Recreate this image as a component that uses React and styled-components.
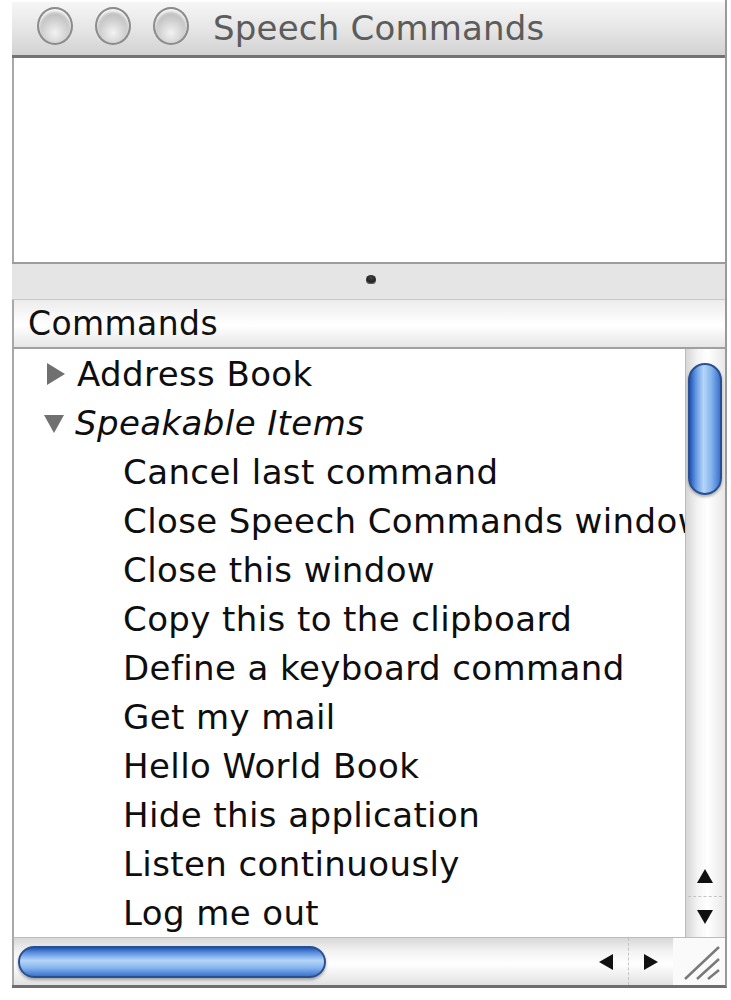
import React from "react";
import styled, { createGlobalStyle } from "styled-components";

const Global = createGlobalStyle`
  html, body { margin: 0; padding: 0; background: #ffffff; }
  body { font-family: "DejaVu Sans", "Liberation Sans", sans-serif; }
`;

const Window = styled.div`
  margin-left: 12px;
  width: 715px;
  height: 988px;
  display: flex;
  flex-direction: column;
  background: #fff;
  border-right: 2px solid #9a9a9a;
  border-bottom: 3px solid #6e6e6e;
  box-sizing: border-box;
`;

const TitleBar = styled.div`
  height: 56px;
  margin-top: 2px;
  display: flex;
  align-items: center;
  padding-left: 25px;
  gap: 22px;
  background: linear-gradient(to bottom, #f6f6f6 0%, #e6e6e6 50%, #d2d2d2 100%);
  border-bottom: 3px solid #727272;
  box-sizing: border-box;
`;

const Light = styled.div`
  width: 36px;
  height: 38px;
  border-radius: 50%;
  box-sizing: border-box;
  border: 2px solid #8c8c8c;
  background: radial-gradient(circle at 50% 70%, #f2f2f2 0%, #cfcfcf 45%, #a8a8a8 100%);
  box-shadow: inset 0 3px 3px rgba(255,255,255,0.9);
  margin-top: -6px;
`;

const Title = styled.div`
  margin-left: 2px;
  font-size: 34px;
  color: #5c5c5c;
  margin-top: -2px;
  letter-spacing: 0.2px;
`;

const TopPane = styled.div`
  height: 204px;
  background: #fff;
  border-left: 2px solid #a8a8a8;
  box-sizing: border-box;
`;

const Splitter = styled.div`
  height: 38px;
  display: flex;
  align-items: center;
  justify-content: center;
  background: #e5e5e5;
  border-top: 2px solid #9c9c9c;
  border-bottom: 1px solid #c8c8c8;
  box-sizing: border-box;
`;

const Dimple = styled.div`
  width: 10px;
  height: 9px;
  border-radius: 50% 50% 40% 40%;
  background: radial-gradient(circle at 50% 30%, #444 0%, #222 55%, #aaa 100%);
  margin-left: 4px;
  margin-top: -4px;
`;

const Header = styled.div`
  height: 49px;
  display: flex;
  align-items: center;
  padding-left: 14px;
  font-size: 33px;
  letter-spacing: 0.4px;
  color: #111;
  background: linear-gradient(to bottom, #ececec 0%, #fbfbfb 40%, #ffffff 55%, #e6e6e6 100%);
  border-left: 2px solid #a8a8a8;
  border-bottom: 2px solid #a0a0a0;
  box-sizing: border-box;
`;

const Body = styled.div`
  flex: 1;
  display: flex;
  min-height: 0;
  border-left: 2px solid #a8a8a8;
`;

const List = styled.div`
  flex: 1;
  overflow: hidden;
  padding-top: 1px;
  display: flex;
  flex-direction: column;
  white-space: nowrap;
`;

const Row = styled.div`
  height: 49px;
  display: flex;
  align-items: center;
  padding-left: ${(p) => p.$indent}px;
  font-size: 34px;
  letter-spacing: 0.4px;
  color: #0e0e0e;
  font-style: ${(p) => (p.$italic ? "italic" : "normal")};
`;

const Disclosure = styled.svg`
  width: 22px;
  height: 24px;
  margin-right: 10px;
  flex-shrink: 0;
`;

const VScroll = styled.div`
  width: 40px;
  display: flex;
  flex-direction: column;
  background: linear-gradient(to right, #d6d6d6 0%, #f4f4f4 30%, #ffffff 55%, #e8e8e8 100%);
  border-left: 1px solid #bcbcbc;
  box-sizing: border-box;
  padding: 14px 3px 0 2px;
`;

const VThumb = styled.div`
  height: 132px;
  border-radius: 18px;
  border: 2px solid #2a4f90;
  box-sizing: border-box;
  background: linear-gradient(to right, #2456b0 0%, #5d93e2 18%, #b6d5f8 45%, #86b6ef 70%, #3d72cc 100%);
  box-shadow: 0 2px 3px rgba(0,0,0,0.3);
`;

const Spacer = styled.div`
  flex: 1;
`;

const ArrowBox = styled.div`
  height: ${(p) => p.$h}px;
  display: flex;
  align-items: center;
  justify-content: center;
  border-top: ${(p) => (p.$sep ? "1px dashed #c4c4c4" : "none")};
`;

const BottomBar = styled.div`
  height: 48px;
  display: flex;
  border-left: 2px solid #a8a8a8;
  border-top: 1px solid #bcbcbc;
  box-sizing: border-box;
`;

const HScroll = styled.div`
  flex: 1;
  display: flex;
  align-items: center;
  padding-left: 4px;
  background: linear-gradient(to bottom, #d8d8d8 0%, #f4f4f4 30%, #ffffff 55%, #e2e2e2 100%);
`;

const HThumb = styled.div`
  width: 308px;
  height: 32px;
  border-radius: 16px;
  border: 2px solid #2a4f90;
  box-sizing: border-box;
  background: linear-gradient(to bottom, #2456b0 0%, #5d93e2 18%, #b6d5f8 45%, #86b6ef 70%, #3d72cc 100%);
  box-shadow: 0 2px 3px rgba(0,0,0,0.3);
`;

const HArrows = styled.div`
  display: flex;
  align-items: center;
  height: 100%;
`;

const HArrowBox = styled.div`
  width: 44px;
  height: 100%;
  display: flex;
  align-items: center;
  justify-content: center;
  border-left: ${(p) => (p.$sep ? "1px dashed #c4c4c4" : "none")};
`;

const Corner = styled.div`
  width: 52px;
  display: flex;
  align-items: flex-end;
  justify-content: flex-end;
  background: #fafafa;
  padding: 0 4px 4px 0;
  box-sizing: border-box;
`;

const items = [
  "Cancel last command",
  "Close Speech Commands window",
  "Close this window",
  "Copy this to the clipboard",
  "Define a keyboard command",
  "Get my mail",
  "Hello World Book",
  "Hide this application",
  "Listen continuously",
  "Log me out",
];

const Tri = ({ d }) => (
  <svg width="18" height="16" viewBox="0 0 18 16">
    <path d={d} fill="#111" />
  </svg>
);

export default function App() {
  return (
    <>
      <Global />
      <Window>
        <TitleBar>
          <Light />
          <Light />
          <Light />
          <Title>Speech Commands</Title>
        </TitleBar>
        <TopPane />
        <Splitter>
          <Dimple />
        </Splitter>
        <Header>Commands</Header>
        <Body>
          <List>
            <Row $indent={31}>
              <Disclosure viewBox="0 0 22 24">
                <path d="M2 1 L20 12 L2 23 Z" fill="#707070" />
              </Disclosure>
              Address Book
            </Row>
            <Row $indent={29} $italic>
              <Disclosure viewBox="0 0 22 24">
                <path d="M1 4 L21 4 L11 22 Z" fill="#707070" />
              </Disclosure>
              Speakable Items
            </Row>
            {items.map((t) => (
              <Row key={t} $indent={109}>
                {t}
              </Row>
            ))}
          </List>
          <VScroll>
            <VThumb />
            <Spacer />
            <ArrowBox $h={40}>
              <Tri d="M9 1 L17 15 L1 15 Z" />
            </ArrowBox>
            <ArrowBox $h={40} $sep>
              <Tri d="M1 1 L17 1 L9 15 Z" />
            </ArrowBox>
          </VScroll>
        </Body>
        <BottomBar>
          <HScroll>
            <HThumb />
            <Spacer />
            <HArrows>
              <HArrowBox>
                <svg width="16" height="18" viewBox="0 0 16 18">
                  <path d="M1 9 L15 1 L15 17 Z" fill="#111" />
                </svg>
              </HArrowBox>
              <HArrowBox $sep>
                <svg width="16" height="18" viewBox="0 0 16 18">
                  <path d="M15 9 L1 1 L1 17 Z" fill="#111" />
                </svg>
              </HArrowBox>
            </HArrows>
          </HScroll>
          <Corner>
            <svg width="40" height="38" viewBox="0 0 40 38">
              <path d="M4 36 L38 4 M16 36 L38 16 M27 36 L38 27" stroke="#7a7a7a" strokeWidth="2.5" />
              <path d="M6 37 L38 7 M18 37 L38 19 M29 37 L38 30" stroke="#fff" strokeWidth="1" />
            </svg>
          </Corner>
        </BottomBar>
      </Window>
    </>
  );
}
